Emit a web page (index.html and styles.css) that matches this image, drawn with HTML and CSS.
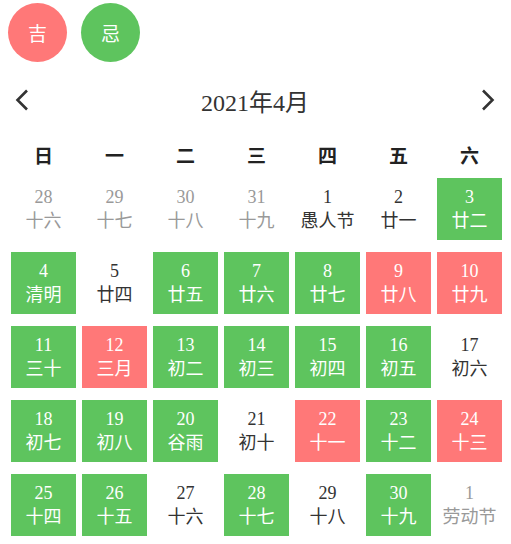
FILE: index.html
```html
<!DOCTYPE html>
<html lang="zh">
<head>
<meta charset="utf-8">
<title>日历</title>
<link rel="stylesheet" href="styles.css">
</head>
<body>
<div class="page">
  <div class="badges">
    <div class="badge good">吉</div>
    <div class="badge bad">忌</div>
  </div>
  <div class="header">
    <svg class="arrow left" width="14" height="22" viewBox="0 0 14 22"><polyline points="12,1.5 2.5,11 12,20.5" fill="none" stroke="#333" stroke-width="2.6"/></svg>
    <div class="title">2021年4月</div>
    <svg class="arrow right" width="14" height="22" viewBox="0 0 14 22"><polyline points="2,1.5 11.5,11 2,20.5" fill="none" stroke="#333" stroke-width="2.6"/></svg>
  </div>
  <div class="weekdays">
    <div>日</div><div>一</div><div>二</div><div>三</div><div>四</div><div>五</div><div>六</div>
  </div>
  <div class="grid">
    <div class="cell other"><span class="num">28</span><span class="lunar">十六</span></div>
    <div class="cell other"><span class="num">29</span><span class="lunar">十七</span></div>
    <div class="cell other"><span class="num">30</span><span class="lunar">十八</span></div>
    <div class="cell other"><span class="num">31</span><span class="lunar">十九</span></div>
    <div class="cell"><span class="num">1</span><span class="lunar">愚人节</span></div>
    <div class="cell"><span class="num">2</span><span class="lunar">廿一</span></div>
    <div class="cell green"><span class="num">3</span><span class="lunar">廿二</span></div>

    <div class="cell green"><span class="num">4</span><span class="lunar">清明</span></div>
    <div class="cell"><span class="num">5</span><span class="lunar">廿四</span></div>
    <div class="cell green"><span class="num">6</span><span class="lunar">廿五</span></div>
    <div class="cell green"><span class="num">7</span><span class="lunar">廿六</span></div>
    <div class="cell green"><span class="num">8</span><span class="lunar">廿七</span></div>
    <div class="cell red"><span class="num">9</span><span class="lunar">廿八</span></div>
    <div class="cell red"><span class="num">10</span><span class="lunar">廿九</span></div>

    <div class="cell green"><span class="num">11</span><span class="lunar">三十</span></div>
    <div class="cell red"><span class="num">12</span><span class="lunar">三月</span></div>
    <div class="cell green"><span class="num">13</span><span class="lunar">初二</span></div>
    <div class="cell green"><span class="num">14</span><span class="lunar">初三</span></div>
    <div class="cell green"><span class="num">15</span><span class="lunar">初四</span></div>
    <div class="cell green"><span class="num">16</span><span class="lunar">初五</span></div>
    <div class="cell"><span class="num">17</span><span class="lunar">初六</span></div>

    <div class="cell green"><span class="num">18</span><span class="lunar">初七</span></div>
    <div class="cell green"><span class="num">19</span><span class="lunar">初八</span></div>
    <div class="cell green"><span class="num">20</span><span class="lunar">谷雨</span></div>
    <div class="cell"><span class="num">21</span><span class="lunar">初十</span></div>
    <div class="cell red"><span class="num">22</span><span class="lunar">十一</span></div>
    <div class="cell green"><span class="num">23</span><span class="lunar">十二</span></div>
    <div class="cell red"><span class="num">24</span><span class="lunar">十三</span></div>

    <div class="cell green"><span class="num">25</span><span class="lunar">十四</span></div>
    <div class="cell green"><span class="num">26</span><span class="lunar">十五</span></div>
    <div class="cell"><span class="num">27</span><span class="lunar">十六</span></div>
    <div class="cell green"><span class="num">28</span><span class="lunar">十七</span></div>
    <div class="cell"><span class="num">29</span><span class="lunar">十八</span></div>
    <div class="cell green"><span class="num">30</span><span class="lunar">十九</span></div>
    <div class="cell other"><span class="num">1</span><span class="lunar">劳动节</span></div>
  </div>
</div>
</body>
</html>
```

FILE: styles.css
```css
html, body {
  margin: 0;
  padding: 0;
  background: #fff;
}
body {
  font-family: "Liberation Serif", "Noto Sans CJK SC", serif;
  color: #333;
  overflow: hidden;
}
.page {
  padding: 3px 0 0 8px;
  width: 497px;
}
.badges {
  display: flex;
  gap: 14px;
  height: 60px;
}
.badge {
  width: 59px;
  height: 59px;
  border-radius: 50%;
  color: #fff;
  font-size: 19px;
  display: flex;
  align-items: center;
  justify-content: center;
}
.badge.good { background: #ff7878; }
.badge.bad { background: #5ec45e; }
.header {
  margin-top: 18px;
  height: 38px;
  display: flex;
  align-items: center;
  justify-content: space-between;
  padding: 0 10px 0 7px;
}
.title {
  font-size: 24px;
  color: #333;
}
.weekdays {
  margin-top: 18px;
  display: grid;
  grid-template-columns: repeat(7, 71px);
  height: 35px;
  align-items: center;
  text-align: center;
  font-weight: bold;
  font-size: 19px;
  color: #222;
}
.grid {
  display: grid;
  grid-template-columns: repeat(7, 71px);
  grid-auto-rows: 74px;
}
.cell {
  margin: 6px 3px;
  display: flex;
  flex-direction: column;
  align-items: center;
  justify-content: center;
  color: #333;
  font-size: 18px;
  line-height: 24px;
}
.cell .num { font-size: 18px; }
.cell .lunar { font-size: 18px; }
.cell.other { color: #999; }
.cell.green { background: #5ec45e; color: #fff; }
.cell.red { background: #ff7878; color: #fff; }
```
